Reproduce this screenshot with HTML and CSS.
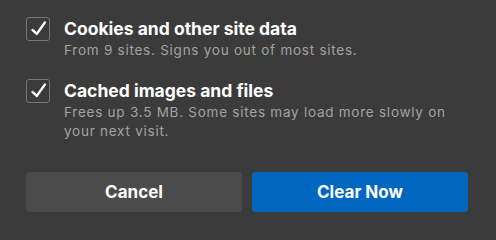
FILE: index.html
```html
<!DOCTYPE html>
<html>
<head>
<meta charset="utf-8">
<link rel="stylesheet" href="styles.css">
</head>
<body>
<div class="dialog">
  <div class="options">
    <label class="option">
      <span class="check">
        <svg viewBox="0 0 21 21" width="21" height="21"><path d="M5.6 12.1 L9.8 15.9 L17.8 4.6" fill="none" stroke="#fff" stroke-width="2.5" stroke-linecap="round" stroke-linejoin="round"/></svg>
      </span>
      <span class="text">
        <span class="title">Cookies and other site data</span>
        <span class="desc">From 9 sites. Signs you out of most sites.</span>
      </span>
    </label>
    <label class="option">
      <span class="check">
        <svg viewBox="0 0 21 21" width="21" height="21"><path d="M5.6 12.1 L9.8 15.9 L17.8 4.6" fill="none" stroke="#fff" stroke-width="2.5" stroke-linecap="round" stroke-linejoin="round"/></svg>
      </span>
      <span class="text">
        <span class="title">Cached images and files</span>
        <span class="desc">Frees up 3.5 MB. Some sites may load more slowly on your next visit.</span>
      </span>
    </label>
  </div>
  <div class="buttons">
    <button class="btn btn-cancel">Cancel</button>
    <button class="btn btn-primary">Clear Now</button>
  </div>
</div>
</body>
</html>
```
FILE: styles.css
```css
html, body {
  margin: 0;
  padding: 0;
  background: #3b3b3b;
}
body {
  width: 496px;
  height: 236px;
  overflow: hidden;
  font-family: Inter, "Liberation Sans", sans-serif;
  color: #fff;
}
.dialog {
  padding: 17px 28px 0 26px;
}
.options {
  display: flex;
  flex-direction: column;
  gap: 19px;
}
.option {
  display: flex;
  gap: 14px;
  align-items: flex-start;
}
.check {
  flex: none;
  box-sizing: border-box;
  width: 24px;
  height: 24px;
  border: 1.5px solid #777;
  border-radius: 3px;
  display: block;
}
.check svg {
  display: block;
  width: 21px;
  height: 21px;
}
.text {
  display: flex;
  flex-direction: column;
  padding-top: 1px;
  min-width: 0;
}
.title {
  font-size: 17.5px;
  font-weight: 700;
  line-height: 22px;
  color: #fff;
}
.desc {
  font-size: 13.5px;
  letter-spacing: 0.75px;
  line-height: 19px;
  color: #a2a2a2;
  margin-top: 1px;
}
.buttons {
  display: flex;
  gap: 10px;
  margin-top: 31px;
}
.btn {
  flex: 1;
  height: 40px;
  border: none;
  border-radius: 4px;
  font-family: Inter, "Liberation Sans", sans-serif;
  font-size: 17px;
  font-weight: 700;
  color: #fff;
  padding: 0;
}
.btn-cancel {
  background: #4b4b4b;
}
.btn-primary {
  background: #0067c0;
}
```
